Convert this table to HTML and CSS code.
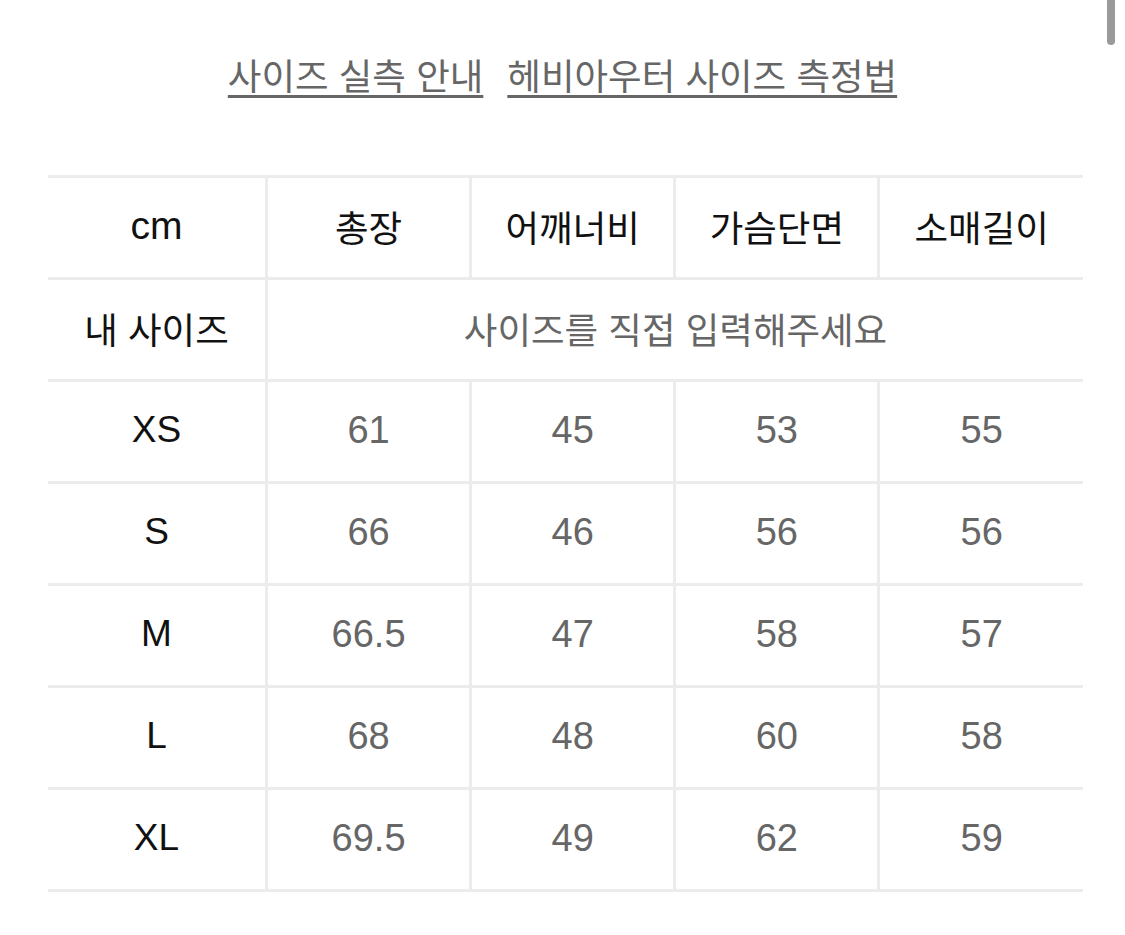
FILE: index.html
```html
<!DOCTYPE html>
<html lang="ko">
<head>
<meta charset="utf-8">
<link rel="stylesheet" href="styles.css">
</head>
<body>
<div class="page">
  <nav class="links">
    <a href="#" class="link">사이즈 실측 안내</a>
    <a href="#" class="link">헤비아우터 사이즈 측정법</a>
  </nav>
  <table class="size-table">
    <tr class="head">
      <td class="label">cm</td>
      <td>총장</td>
      <td>어깨너비</td>
      <td>가슴단면</td>
      <td>소매길이</td>
    </tr>
    <tr class="mine">
      <td class="label">내 사이즈</td>
      <td class="hint" colspan="4">사이즈를 직접 입력해주세요</td>
    </tr>
    <tr><td class="label">XS</td><td>61</td><td>45</td><td>53</td><td>55</td></tr>
    <tr><td class="label">S</td><td>66</td><td>46</td><td>56</td><td>56</td></tr>
    <tr><td class="label">M</td><td>66.5</td><td>47</td><td>58</td><td>57</td></tr>
    <tr><td class="label">L</td><td>68</td><td>48</td><td>60</td><td>58</td></tr>
    <tr><td class="label">XL</td><td>69.5</td><td>49</td><td>62</td><td>59</td></tr>
  </table>
</div>
<div class="scroll-thumb"></div>
</body>
</html>
```

FILE: styles.css
```css
html, body {
  margin: 0;
  padding: 0;
  background: #fff;
}
body {
  font-family: "Liberation Sans", "Noto Sans CJK KR", sans-serif;
  width: 1125px;
  height: 935px;
  overflow: hidden;
  position: relative;
}
.page {
  padding: 45px 42px 0 48px;
}
.links {
  display: flex;
  justify-content: center;
  gap: 24px;
  height: 58px;
  align-items: center;
  margin-bottom: 72px;
  padding-right: 6px;
}
.link {
  font-family: "Noto Sans CJK KR", sans-serif;
  font-size: 36.5px;
  color: #666;
  text-decoration: underline;
  text-decoration-thickness: 3px;
  text-underline-offset: 5px;
}
.size-table {
  border-collapse: collapse;
  width: 1035px;
  table-layout: fixed;
}
.size-table td {
  height: 96px;
  padding: 0 0 3px;
  text-align: center;
  vertical-align: middle;
  border-top: 3px solid #ececec;
  border-bottom: 3px solid #ececec;
  border-left: 3px solid #ececec;
  font-size: 38px;
  color: #666;
}
.size-table td:first-child {
  width: 217px;
  border-left: none;
}
.size-table .label {
  color: #111;
  font-size: 37px;
}
.size-table .head td {
  color: #111;
  font-family: "Noto Sans CJK KR", sans-serif;
  font-size: 36.5px;
}
.size-table .head td.label {
  font-family: "Liberation Sans", sans-serif;
  font-size: 39px;
}
.size-table .mine td.label {
  font-family: "Noto Sans CJK KR", sans-serif;
  font-size: 36.5px;
}
.size-table .hint {
  font-family: "Noto Sans CJK KR", sans-serif;
  font-size: 36.5px;
  color: #666;
}
.scroll-thumb {
  position: absolute;
  top: 0;
  left: 1107px;
  width: 8px;
  height: 45px;
  border-radius: 0 0 4px 4px;
  background: #9a9a9a;
}
```
